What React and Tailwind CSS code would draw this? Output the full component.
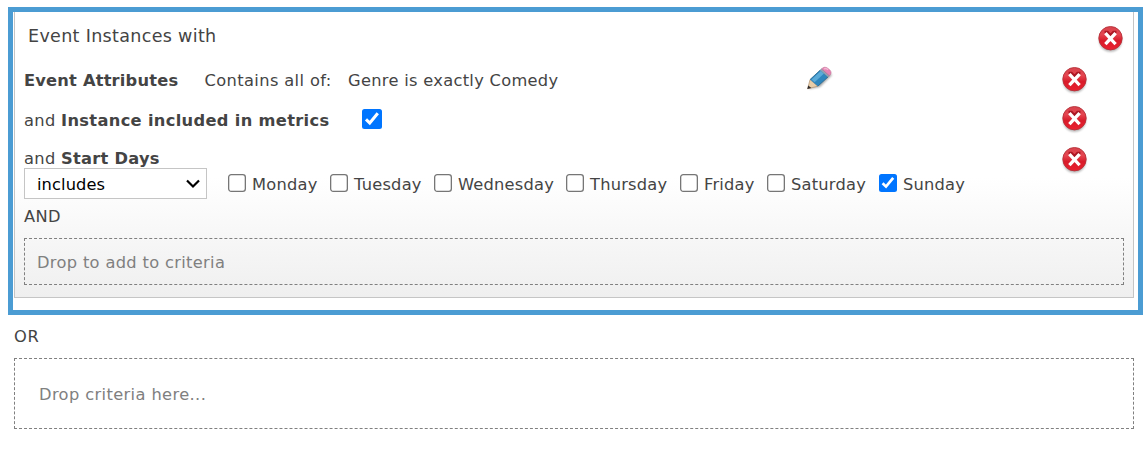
import React from "react";

function DeleteIcon() {
  return (
    <svg width="27" height="29" viewBox="0 0 27 29" className="block shrink-0">
      <defs>
        <linearGradient id="redFill" x1="0" y1="0" x2="0" y2="1">
          <stop offset="0" stopColor="#d8434d" />
          <stop offset="0.35" stopColor="#e54550" />
          <stop offset="0.6" stopColor="#d81c2a" />
          <stop offset="1" stopColor="#ec2030" />
        </linearGradient>
        <filter id="soft" x="-20%" y="-20%" width="140%" height="150%">
          <feGaussianBlur stdDeviation="0.9" />
        </filter>
      </defs>
      <ellipse cx="13.5" cy="15.5" rx="11.3" ry="11.3" fill="#000" opacity="0.3" filter="url(#soft)" />
      <circle cx="13.5" cy="13.2" r="11.7" fill="url(#redFill)" stroke="#b5323a" strokeWidth="0.9" />
      <path d="M7.6 6.9 L10.6 6.9 L13.5 9.9 L16.4 6.9 L19.4 6.9" fill="none" stroke="#ab1824" strokeWidth="2.2" />
      <path d="M9.5 9.3 L17.5 18 M17.5 9.3 L9.5 18" stroke="#fff" strokeWidth="3.3" strokeLinecap="square" />
    </svg>
  );
}

function PencilIcon() {
  return (
    <svg width="28" height="27" viewBox="0 0 28 27" className="block shrink-0">
      <defs>
        <filter id="pencilShadow" x="-20%" y="-20%" width="140%" height="140%">
          <feGaussianBlur stdDeviation="1" />
        </filter>
      </defs>
      <path d="M3 23 L7 14 L19 3 L26 9 L14 21 Z" fill="#000" opacity="0.35" filter="url(#pencilShadow)" />
      <path d="M1.6 22.8 L4 13.6 L11.8 20.2 Z" fill="#e8cda8" stroke="#a98a68" strokeWidth="0.6" />
      <path d="M1.3 23.1 L2.3 19.6 L5.3 22 Z" fill="#2f2b2b" />
      <path d="M4 13.6 L14.3 4 L22 11 L11.8 20.2 Z" fill="#2f86bd" />
      <path d="M5.6 13.4 L15 4.8 L18 7.4 L8.6 16.2 Z" fill="#5aaad8" />
      <path d="M4 13.6 L14.3 4 M11.8 20.2 L22 11" stroke="#28678d" strokeWidth="0.8" />
      <path d="M14.3 4 L15.6 2.8 L23.4 9.7 L22 11 Z" fill="#8fa6b8" stroke="#71808c" strokeWidth="0.4" />
      <path d="M15.6 2.8 C17.4 0.9 19.8 0.7 21.8 2.3 L24 4.2 C25.8 6 25.2 8 23.4 9.7 Z" fill="#e583b3" stroke="#b8668b" strokeWidth="0.5" />
      <path d="M18 3 C19.5 2 21 2.6 22 3.8" fill="none" stroke="#f3b4d2" strokeWidth="1.4" />
    </svg>
  );
}

function Check({ checked, big }) {
  if (!checked) {
    return (
      <svg width="18" height="18" viewBox="0 0 18 18" className="block shrink-0">
        <rect x="0.65" y="0.65" width="16.7" height="16.7" rx="2.6" fill="#fff" stroke="#767676" strokeWidth="1.3" />
      </svg>
    );
  }
  return (
    <span className={(big ? "size-5" : "size-[18px]") + " block shrink-0 rounded-[2.5px] bg-[#0075ff]"}>
      <svg viewBox="0 0 18 18" className="block size-full">
        <path d="M3.6 9.3 L7 12.6 L14.2 3.8" fill="none" stroke="#fff" strokeWidth="2.7" />
      </svg>
    </span>
  );
}

const days = [
  { name: "Monday", box: "w-[102px]" },
  { name: "Tuesday", box: "w-[104px]" },
  { name: "Wednesday", box: "w-[132px]" },
  { name: "Thursday", box: "w-[114px]" },
  { name: "Friday", box: "w-[87px]" },
  { name: "Saturday", box: "w-[112px]" },
  { name: "Sunday", box: "w-[100px]", on: true },
];

export default function App() {
  return (
    <div className="h-[450px] w-[1148px] overflow-hidden bg-white pt-[7px] pl-2 font-['DejaVu_Sans',sans-serif] text-[16.25px] leading-5 tracking-[0.33px] whitespace-nowrap text-[#444]">
      <div className="h-[308px] w-[1135px] border-5 border-[#4b9cd3] pl-px">
        <div className="flex h-[286px] w-[1120px] flex-col border border-t-0 border-[#c5c5c5] bg-linear-to-b from-white from-58% to-[#efefef] px-[9px]">
          <div className="flex h-[46px] shrink-0 justify-between pt-[13px] pl-1 text-[17.5px]">
            <span className="pt-px">Event Instances with</span>
            <DeleteIcon />
          </div>
          <div className="flex h-[43px] shrink-0 pt-2">
            <span className="w-[180.5px] pt-[5px] font-bold tracking-[0.2px]">Event Attributes</span>
            <span className="w-[143.5px] pt-[5px] tracking-[0.38px]">Contains all of:</span>
            <span className="w-[458px] pt-[5px] tracking-[0.3px]">Genre is exactly Comedy</span>
            <PencilIcon />
            <span className="ml-[227px]"><DeleteIcon /></span>
          </div>
          <div className="flex h-[37px] shrink-0 pt-1">
            <span className="w-[338px] pt-[6px]">and <b>Instance included in metrics</b></span>
            <span className="pt-1"><Check checked big /></span>
            <span className="ml-[679px]"><DeleteIcon /></span>
          </div>
          <div className="flex h-[30px] shrink-0 pt-2">
            <span className="w-[1037px] pt-[3px]">and <b className="tracking-[0.25px]">Start Days</b></span>
            <DeleteIcon />
          </div>
          <div className="flex h-[31px] shrink-0 items-center">
            <div className="mr-[21px] flex h-[31px] w-[183px] items-center justify-between border border-[#c5c5c5] bg-white pr-[6px] pl-3 text-black">
              <span className="pt-[2px] tracking-[0.1px]">includes</span>
              <svg width="14" height="10" viewBox="0 0 14 10" className="block">
                <path d="M1 1.5 L7 7.5 L13 1.5" fill="none" stroke="#000" strokeWidth="2.2" />
              </svg>
            </div>
            {days.map((d) => (
              <div key={d.name} className={d.box + " flex h-[31px] shrink-0 gap-[6px] pt-[6px] tracking-[0.22px]"}>
                <Check checked={d.on} />
                <span className="pt-px">{d.name}</span>
              </div>
            ))}
          </div>
          <div className="h-[39px] shrink-0 pt-2">AND</div>
          <div className="flex h-[47px] w-[1100px] shrink-0 items-center border border-dashed border-[#808080] pt-[2px] pl-3 text-[#808080]">
            Drop to add to criteria
          </div>
        </div>
      </div>
      <div className="mt-3 ml-[6px] h-[31px] tracking-[0.6px]">OR</div>
      <div className="ml-[6px] flex h-[71px] w-[1120px] items-center border border-dashed border-[#808080] pt-[2px] pl-6 tracking-[0.38px] text-[#808080]">
        Drop criteria here...
      </div>
    </div>
  );
}
